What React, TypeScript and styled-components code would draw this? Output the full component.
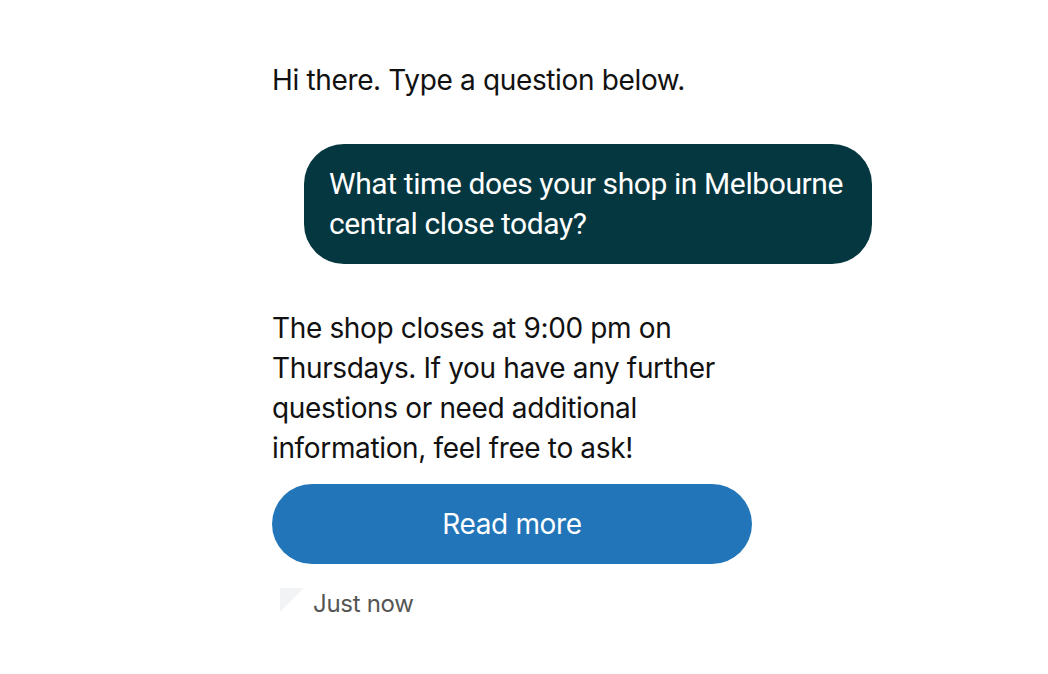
import React from "react";
import styled, { createGlobalStyle } from "styled-components";

const Global = createGlobalStyle`
  html, body { margin: 0; padding: 0; background: #ffffff; }
  body { font-family: Inter, "Noto Sans", sans-serif; -webkit-font-smoothing: antialiased; }
`;

const Page = styled.div`
  padding: 60px 0 0 272px;
  width: 600px;
  display: flex;
  flex-direction: column;
`;

const BotText = styled.p<{ $mb: number }>`
  margin: 0 0 ${(p) => p.$mb}px 0;
  width: 480px;
  font-size: 28px;
  line-height: 40px;
  color: #111;
  letter-spacing: -0.35px;
`;

const UserRow = styled.div`
  display: flex;
  justify-content: flex-end;
  margin-bottom: 44px;
`;

const UserBubble = styled.div`
  max-width: 515px;
  padding: 20px 28px 20px 25px;
  background: #053741;
  color: #ffffff;
  border-radius: 40px;
  font-family: Roboto, sans-serif;
  font-size: 30px;
  letter-spacing: -0.4px;
  line-height: 40px;
`;

const ActionButton = styled.button`
  width: 480px;
  height: 80px;
  border: none;
  border-radius: 40px;
  background: #2175b8;
  color: #ffffff;
  font-family: Inter, sans-serif;
  font-size: 28px;
  letter-spacing: -0.35px;
  cursor: pointer;
  margin-bottom: 24px;
  padding: 0;
`;

const Meta = styled.div`
  display: flex;
  align-items: flex-start;
  gap: 9px;
  padding-left: 8px;
`;

const Tail = styled.div`
  width: 24px;
  height: 24px;
  background: #f2f3f5;
  clip-path: polygon(0 0, 100% 0, 0 100%);
`;

const Time = styled.span`
  font-size: 24px;
  letter-spacing: -0.3px;
  color: #555555;
  line-height: 32px;
`;

export default function App() {
  return (
    <>
      <Global />
      <Page>
        <BotText $mb={44}>Hi there. Type a question below.</BotText>
        <UserRow>
          <UserBubble>What time does your shop in Melbourne central close today?</UserBubble>
        </UserRow>
        <BotText $mb={16}>
          The shop closes at 9:00 pm on Thursdays. If you have any further questions or need additional information, feel free to ask!
        </BotText>
        <ActionButton>Read more</ActionButton>
        <Meta>
          <Tail />
          <Time>Just now</Time>
        </Meta>
      </Page>
    </>
  );
}
